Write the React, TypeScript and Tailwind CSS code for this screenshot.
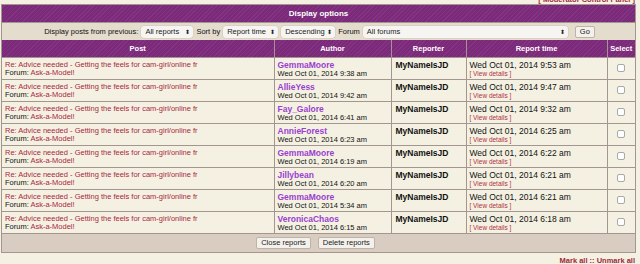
import React from 'react';

type Report = {
  author: string;
  posted: string;
  reported: string;
};

const reports: Report[] = [
  { author: 'GemmaMoore', posted: 'Wed Oct 01, 2014 9:38 am', reported: 'Wed Oct 01, 2014 9:53 am' },
  { author: 'AllieYess', posted: 'Wed Oct 01, 2014 9:42 am', reported: 'Wed Oct 01, 2014 9:47 am' },
  { author: 'Fay_Galore', posted: 'Wed Oct 01, 2014 6:41 am', reported: 'Wed Oct 01, 2014 9:32 am' },
  { author: 'AnnieForest', posted: 'Wed Oct 01, 2014 6:23 am', reported: 'Wed Oct 01, 2014 6:25 am' },
  { author: 'GemmaMoore', posted: 'Wed Oct 01, 2014 6:19 am', reported: 'Wed Oct 01, 2014 6:22 am' },
  { author: 'Jillybean', posted: 'Wed Oct 01, 2014 6:20 am', reported: 'Wed Oct 01, 2014 6:21 am' },
  { author: 'GemmaMoore', posted: 'Wed Oct 01, 2014 5:34 am', reported: 'Wed Oct 01, 2014 6:21 am' },
  { author: 'VeronicaChaos', posted: 'Wed Oct 01, 2014 6:15 am', reported: 'Wed Oct 01, 2014 6:18 am' },
];

const purple =
  'bg-[repeating-linear-gradient(135deg,#7a2a79_0px,#7a2a79_2px,#843482_2px,#843482_3px)]';

function FakeSelect({ label, width }: { label: string; width: string }) {
  return (
    <span
      className={`inline-flex h-[12px] items-center justify-between rounded-[3px] bg-[#f7f5f2] pl-[4px] pr-[3px] text-[7.5px] text-[#222] shadow-[0_0_0_0.5px_#cfc6b8] ${width}`}
    >
      <span>{label}</span>
      <span className="text-[6px] leading-none">⬍</span>
    </span>
  );
}

function SmallButton({ label }: { label: string }) {
  return (
    <span className="inline-flex h-[12px] items-center rounded-[2px] border border-[#bdb3a6] bg-[#f4f1ec] px-[4px] text-[7.5px] text-[#222]">
      {label}
    </span>
  );
}

export default function App() {
  return (
    <div className="h-[264px] w-[640px] overflow-hidden bg-[#f4f1e2] font-['Liberation_Sans',Arial,sans-serif] text-[#111]">
      <div className="flex h-[4px] justify-end overflow-hidden pr-[5px]">
        <span className="-mt-[5px] text-[7.5px] leading-[9px] font-bold text-[#9c2a3a]">[ Moderator Control Panel ]</span>
      </div>

      <div className="ml-[1px] w-[635px] border border-[#a3958f]">
        <div className={`flex h-[17px] items-center justify-center text-[8px] font-bold text-white ${purple}`}>
          Display options
        </div>
        <div className="flex h-[18px] items-center justify-center gap-[3px] border-t border-[#a3958f] bg-[#e4dccd] pl-[2px] text-[7.5px]">
          <span>Display posts from previous:</span>
          <FakeSelect label="All reports" width="w-[52px]" />
          <span>Sort by</span>
          <FakeSelect label="Report time" width="w-[55px]" />
          <FakeSelect label="Descending" width="w-[54px]" />
          <span>Forum</span>
          <FakeSelect label="All forums" width="w-[205px]" />
          <span className="ml-[4px]">
            <SmallButton label="Go" />
          </span>
        </div>

        <table className="w-full table-fixed border-collapse">
          <colgroup>
            <col className="w-[272px]" />
            <col className="w-[117px]" />
            <col className="w-[75px]" />
            <col className="w-[141px]" />
            <col />
          </colgroup>
          <thead>
            <tr className={`h-[17px] text-[7.5px] font-bold text-white ${purple}`}>
              <th className="border-r border-[#a3958f]">Post</th>
              <th className="border-r border-[#a3958f]">Author</th>
              <th className="border-r border-[#a3958f]">Reporter</th>
              <th className="border-r border-[#a3958f]">Report time</th>
              <th>Select</th>
            </tr>
          </thead>
          <tbody>
            {reports.map((r, i) => (
              <tr key={i} className="h-[22px] border-t border-[#a3958f] bg-[#f4f1e3] align-top">
                <td className="border-r border-[#a3958f] pl-[3px] pt-[3px] text-[7.5px] leading-[8.5px]">
                  <div className="text-[#a8283e]">Re: Advice needed - Getting the feels for cam-girl/online fr</div>
                  <div>
                    Forum: <span className="text-[#a8283e]">Ask-a-Model!</span>
                  </div>
                </td>
                <td className="border-r border-[#a3958f] pl-[3px] pt-[2px] text-[7.5px] leading-[8px]">
                  <div className="text-[8.5px] leading-[10px] font-bold text-[#9a3fcf]">{r.author}</div>
                  <div>{r.posted}</div>
                </td>
                <td className="border-r border-[#a3958f] pl-[4px] pt-[3px] text-[8.5px] leading-[9px] font-bold">
                  MyNameIsJD
                </td>
                <td className="border-r border-[#a3958f] pl-[3px] pt-[3px]">
                  <div className="text-[8.5px] leading-[9px]">{r.reported}</div>
                  <div className="text-[6.5px] leading-[8px] text-[#b03040]">[ View details ]</div>
                </td>
                <td className="align-middle">
                  <div className="mx-auto h-[8px] w-[8px] rounded-[2px] border border-[#a9a9a9] bg-white" />
                </td>
              </tr>
            ))}
            <tr className="h-[19px] border-t border-[#a3958f] bg-[#d9ccc1]">
              <td colSpan={5}>
                <div className="flex justify-center gap-[7px] pr-[6px]">
                  <SmallButton label="Close reports" />
                  <SmallButton label="Delete reports" />
                </div>
              </td>
            </tr>
          </tbody>
        </table>
      </div>

      <div className="mt-[2px] flex justify-end pr-[5px] text-[7.5px] font-bold text-[#9c2a3a]">
        <span>Mark all :: Unmark all</span>
      </div>
    </div>
  );
}
